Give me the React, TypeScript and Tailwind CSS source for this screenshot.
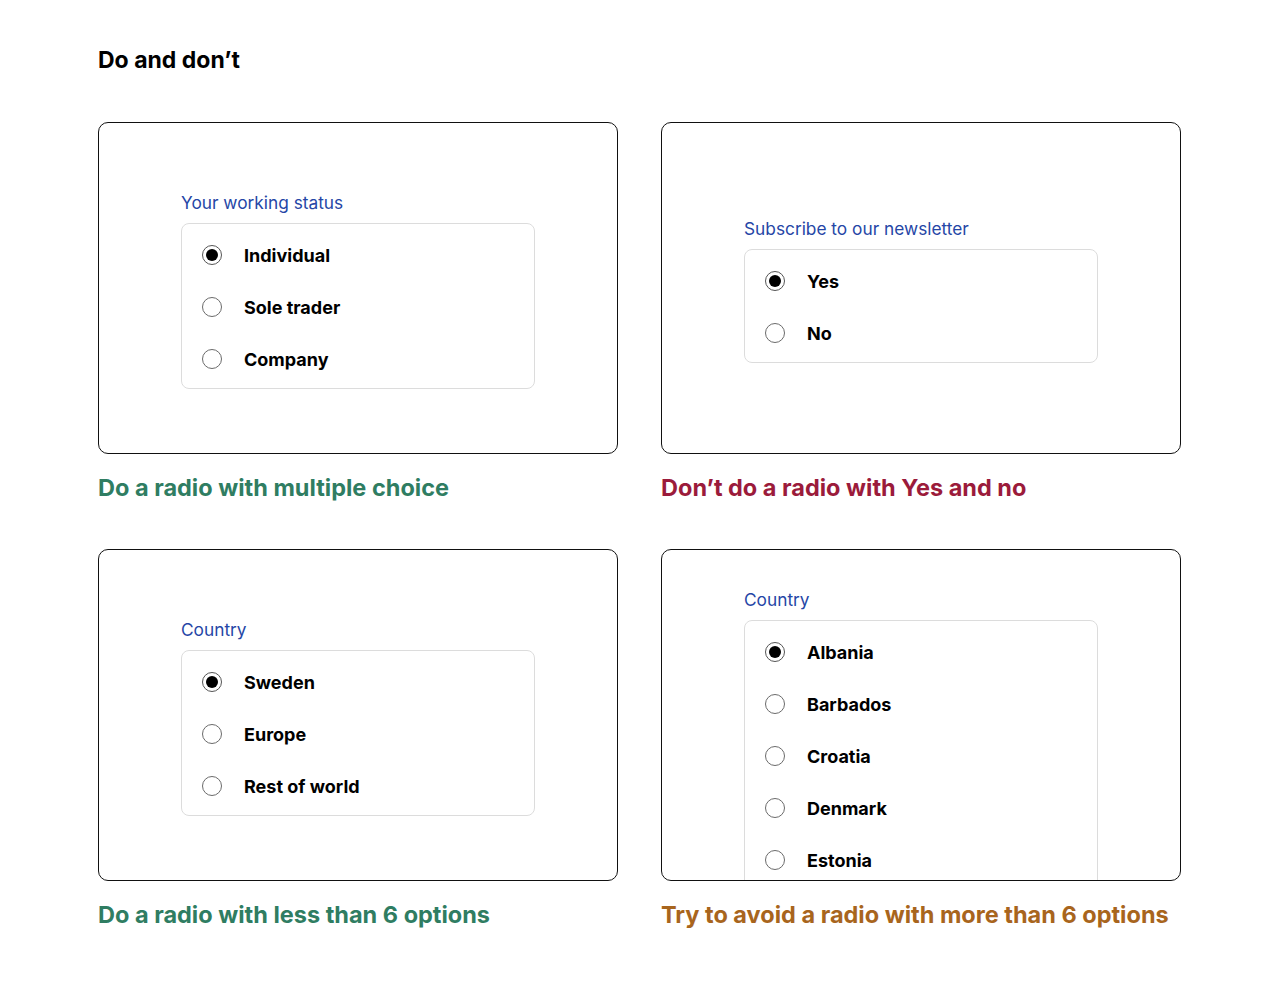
import React from "react";

function Radio({ checked }: { checked?: boolean }) {
  return (
    <span
      className={
        "flex h-5 w-5 shrink-0 items-center justify-center rounded-full border-[1.5px] " +
        (checked ? "border-[#555]" : "border-[#6b6b6b]")
      }
    >
      {checked && <span className="h-3 w-3 rounded-full bg-black" />}
    </span>
  );
}

function Group({ label, options, open }: { label: string; options: string[]; open?: boolean }) {
  return (
    <div className="w-[354px]">
      <div className="mb-[8px] text-[17.3px] leading-6 text-[#2546a6]">{label}</div>
      <div
        className={
          "rounded-[8px] border-[1.5px] border-[#dcdcdc] pt-[5px] " + (open ? "pb-[60px]" : "pb-[3px]")
        }
      >
        {options.map((o, i) => (
          <div key={o} className="flex h-[52px] items-center gap-[22px] pl-[20px]">
            <Radio checked={i === 0} />
            <span className="text-[18px] font-bold text-black">{o}</span>
          </div>
        ))}
      </div>
    </div>
  );
}

function Card({ children, top }: { children: React.ReactNode; top?: boolean }) {
  return (
    <div
      className={
        "flex h-[332px] justify-center overflow-hidden rounded-[10px] border-[1.5px] border-[#111] " +
        (top ? "items-start pt-[38px]" : "items-center pt-[4px]")
      }
    >
      {children}
    </div>
  );
}

function Caption({ text, color }: { text: string; color: string }) {
  return (
    <div className={"mt-[18px] text-[23.5px] font-bold leading-8 " + color}>{text}</div>
  );
}

export default function App() {
  return (
    <div
      className="min-h-[1000px] bg-white pl-[98px] pt-[44px] text-black"
      style={{ fontFamily: "Inter, 'Noto Sans', sans-serif" }}
    >
      <h1 className="text-[23px] font-bold leading-8">Do and don’t</h1>
      <div className="mt-[46px] grid w-[1083px] grid-cols-[520px_520px] gap-x-[43px] gap-y-[45px]">
        <div>
          <Card>
            <Group label="Your working status" options={["Individual", "Sole trader", "Company"]} />
          </Card>
          <Caption text="Do a radio with multiple choice" color="text-[#2f7d62]" />
        </div>
        <div>
          <Card>
            <Group label="Subscribe to our newsletter" options={["Yes", "No"]} />
          </Card>
          <Caption text="Don’t do a radio with Yes and no" color="text-[#9b1b3b]" />
        </div>
        <div>
          <Card>
            <Group label="Country" options={["Sweden", "Europe", "Rest of world"]} />
          </Card>
          <Caption text="Do a radio with less than 6 options" color="text-[#2f7d62]" />
        </div>
        <div>
          <Card top>
            <Group
              label="Country"
              open
              options={["Albania", "Barbados", "Croatia", "Denmark", "Estonia"]}
            />
          </Card>
          <Caption text="Try to avoid a radio with more than 6 options" color="text-[#a8651d]" />
        </div>
      </div>
    </div>
  );
}
